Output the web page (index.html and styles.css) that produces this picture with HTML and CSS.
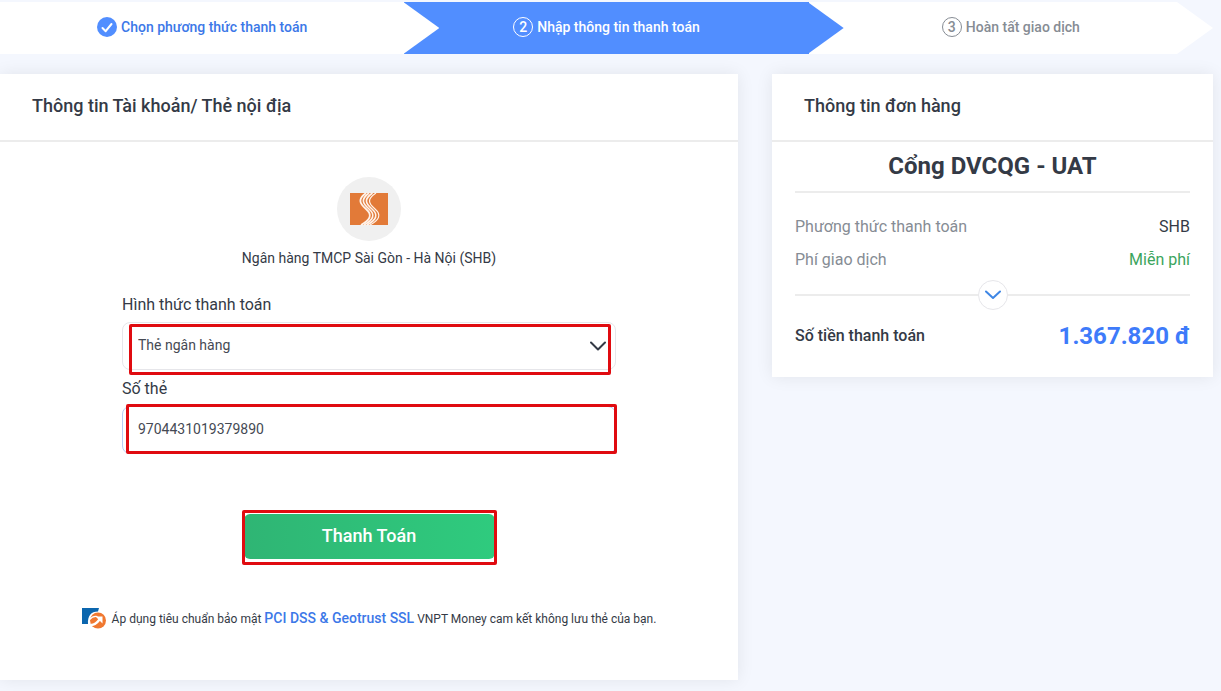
FILE: index.html
```html
<!DOCTYPE html>
<html lang="vi">
<head>
  <meta charset="UTF-8" />
  <meta name="viewport" content="width=device-width, initial-scale=1.0" />
  <title>Nhập thông tin thanh toán</title>
  <link rel="stylesheet" href="styles.css">
</head>
<body>
  <div class="page">
    <!-- Steps -->
    <ol class="steps">
      <li class="step step-done">
        <svg class="step-check" viewBox="0 0 20 20" aria-hidden="true">
          <circle cx="10" cy="10" r="10" fill="#518eff" />
          <path d="M5.5 11l3.2 3.2L14.5 7" fill="none" stroke="#fff" stroke-width="2" stroke-linecap="round" stroke-linejoin="round" />
        </svg>
        <span>Chọn phương thức thanh toán</span>
      </li>
      <li class="step step-active">
        <span class="step-number">2</span>
        <span>Nhập thông tin thanh toán</span>
      </li>
      <li class="step step-last">
        <span class="step-number">3</span>
        <span>Hoàn tất giao dịch</span>
      </li>
    </ol>

    <main class="content">
      <!-- Payment form -->
      <section class="card">
        <h2 class="card-title">Thông tin Tài khoản/ Thẻ nội địa</h2>
        <form class="pay-form">
          <div class="bank">
            <div class="bank-logo">
              <svg viewBox="0 0 40 34" aria-hidden="true">
                <rect x="1" y="1" width="38" height="32" fill="#e27a38" />
                <g fill="none" stroke="#fff3ea">
                  <path d="M17 1C9 7 10 11 17 17C24 23 21 28 12 33" stroke-width="1.8" />
                  <path d="M20 1C12 7 13 11 20 17C27 23 24 28 15 33" stroke-width="1.6" />
                  <path d="M23.500 1C15 7 16 11 23 17C30 23 27 28 18 33" stroke-width="1.6" />
                  <path d="M27 1C18 7 19 11 26 17C33 23 30 28 21 33" stroke-width="1.2" />
                </g>
              </svg>
            </div>
            <p class="bank-name">Ngân hàng TMCP Sài Gòn - Hà Nội (SHB)</p>
          </div>

          <label for="method">Hình thức thanh toán</label>
          <div class="field field-select">
            <select id="method" name="method">
              <option>Thẻ ngân hàng</option>
            </select>
            <svg class="select-arrow" viewBox="0 0 16 10" aria-hidden="true">
              <path d="M1 1.5l7 7 7-7" fill="none" stroke="#343a46" stroke-width="2" stroke-linecap="round" stroke-linejoin="round" />
            </svg>
          </div>

          <label for="card-number">Số thẻ</label>
          <div class="field field-input">
            <input type="text" id="card-number" name="card-number" value="9704431019379890" inputmode="numeric" />
          </div>

          <div class="submit">
            <button type="submit">Thanh Toán</button>
          </div>
        </form>

        <p class="security">
          <svg class="security-logo" viewBox="0 0 24 21" aria-hidden="true">
            <path d="M0 0H17L16 3.500C9 3.500 5.500 8 6 16H0z" fill="#0b66ae" />
            <circle cx="16" cy="12.500" r="8" fill="#f07830" />
            <path d="M7.500 11.500Q11 7.500 15.500 8.500" fill="none" stroke="#fff" stroke-width="1.200" />
            <path d="M8.500 17Q13 17.500 18 11" fill="none" stroke="#fff" stroke-width="2.400" />
            <path d="M13.500 8.500H20.500V15.500z" fill="#fff" />
          </svg>
          <span>Áp dụng tiêu chuẩn bảo mật <a href="#">PCI DSS &amp; Geotrust SSL</a> VNPT Money cam kết không lưu thẻ của bạn.</span>
        </p>
      </section>

      <!-- Order info -->
      <aside class="card">
        <h2 class="card-title">Thông tin đơn hàng</h2>
        <div class="order">
          <h3 class="merchant">Cổng DVCQG - UAT</h3>
          <dl class="order-rows">
            <div class="order-row">
              <dt>Phương thức thanh toán</dt>
              <dd>SHB</dd>
            </div>
            <div class="order-row">
              <dt>Phí giao dịch</dt>
              <dd class="free">Miễn phí</dd>
            </div>
          </dl>
          <div class="divider">
            <button type="button" class="toggle" aria-label="Xem chi tiết">
              <svg viewBox="0 0 16 10" aria-hidden="true">
                <path d="M1 1.500l7 6.500 7-6.500" fill="none" stroke="#3f87e5" stroke-width="2" stroke-linecap="round" stroke-linejoin="round" />
              </svg>
            </button>
          </div>
          <div class="total">
            <span>Số tiền thanh toán</span>
            <strong>1.367.820 đ</strong>
          </div>
        </div>
      </aside>
    </main>
  </div>
</body>
</html>
```

FILE: styles.css
```css
:root {
  --blue: #518eff;
  --blue-text: #3c78e8;
  --bg: #f4f7fe;
  --text: #343a46;
  --muted: #868c94;
  --line: #ececec;
  --mark: #e00b10;
}

* {
  box-sizing: border-box;
}

body {
  margin: 0;
  background: var(--bg);
  color: var(--text);
  font-family: Roboto, "Liberation Sans", sans-serif;
  font-size: 16px;
  line-height: 24px;
}

h2, h3, p, dl, dd {
  margin: 0;
}

.page {
  padding: 2px 8px 11px 0;
}

/* Steps */
.steps {
  display: grid;
  grid-template-columns: repeat(3, 1fr);
  margin: 0 0 20px;
  padding: 0;
  list-style: none;
}

.step {
  position: relative;
  display: flex;
  align-items: center;
  justify-content: center;
  gap: 4px;
  height: 52px;
  padding-bottom: 2px;
  background: #fff;
  font-size: 14px;
  font-weight: 500;
}

.step::after {
  content: "";
  position: absolute;
  top: 0;
  left: calc(100% - 1px);
  z-index: 1;
  width: 36px;
  height: 100%;
  background: #fff;
  clip-path: polygon(0 0, 100% 50%, 0 100%);
}

.step-done {
  color: var(--blue-text);
}

.step-active,
.step-active::after {
  background: var(--blue);
  color: #fff;
}

.step-active::after {
  z-index: 2;
}

.step-last {
  z-index: 0;
  color: var(--muted);
  clip-path: polygon(0 0, calc(100% - 36px) 0, 100% 50%, calc(100% - 36px) 100%, 0 100%);
}

.step-last::after {
  display: none;
}

.step-check {
  width: 20px;
  height: 20px;
}

.step-number {
  width: 20px;
  height: 20px;
  border: 1px solid currentColor;
  border-radius: 50%;
  line-height: 18px;
  text-align: center;
}

/* Cards */
.content {
  display: grid;
  grid-template-columns: minmax(0, 82fr) minmax(0, 49fr);
  gap: 34px;
  align-items: start;
}

.card {
  background: #fff;
  box-shadow: 0 0 16px rgba(0, 0, 0, 0.08);
}

.card-title {
  padding: 20px 32px 22px;
  border-bottom: 2px solid var(--line);
  font-size: 18px;
  font-weight: 500;
}

/* Payment form */
.pay-form {
  max-width: 494px;
  margin: 0 auto;
  padding-top: 35px;
}

.bank {
  margin-bottom: 23px;
  text-align: center;
}

.bank-logo {
  display: flex;
  align-items: center;
  justify-content: center;
  width: 64px;
  height: 64px;
  margin: 0 auto 5px;
  border-radius: 50%;
  background: #f0f0f0;
}

.bank-logo svg {
  width: 40px;
  height: 34px;
}

.bank-name {
  font-size: 14px;
}

.pay-form label {
  display: block;
  margin-bottom: 5px;
}

.field {
  position: relative;
  margin-bottom: 7px;
}

.field select,
.field input {
  display: block;
  width: 100%;
  height: 48px;
  padding: 0 15px 2px;
  border: 1px solid #e6e6ea;
  border-radius: 8px;
  background: #fff;
  color: #454a54;
  font: inherit;
  font-size: 14px;
  appearance: none;
}

.field input {
  border-color: #b9cdf5;
}

.select-arrow {
  position: absolute;
  top: 19px;
  right: 10px;
  width: 16px;
  height: 10px;
  pointer-events: none;
}

/* Highlight frames */
.field::after,
.submit::after {
  content: "";
  position: absolute;
  border: 3px solid var(--mark);
  border-radius: 2px;
  pointer-events: none;
}

.field-select::after {
  inset: 2px 5px -5px 7px;
}

.field-input::after {
  inset: -2px -1px 0 4px;
}

.submit::after {
  inset: -4px -2px -6px;
}

.submit {
  position: relative;
  width: 251px;
  margin: 60px auto 47px;
}

.submit button {
  display: block;
  width: 100%;
  height: 45px;
  padding: 0 0 2px;
  border: none;
  border-radius: 6px;
  background: linear-gradient(to right, #2fb574, #2fcb7e);
  color: #fff;
  font: inherit;
  font-size: 18px;
  font-weight: 500;
  cursor: pointer;
}

.security {
  display: flex;
  align-items: center;
  justify-content: center;
  gap: 6px;
  padding-bottom: 49px;
  font-size: 12px;
}

.security-logo {
  flex: none;
  width: 24px;
  height: 21px;
}

.security a {
  color: var(--blue-text);
  font-size: 14px;
  font-weight: 500;
  text-decoration: none;
}

/* Order info */
.order {
  padding: 0 23px 25px;
}

.merchant {
  padding: 8px 0 9px;
  border-bottom: 2px solid var(--line);
  font-size: 24px;
  font-weight: 700;
  line-height: 32px;
  text-align: center;
}

.order-rows {
  display: grid;
  gap: 9px;
  padding: 22px 0 8px;
}

.order-row,
.total {
  display: flex;
  align-items: center;
  justify-content: space-between;
}

.order-row dt {
  color: var(--muted);
}

.order-row .free {
  color: #3ba55d;
}

.divider {
  display: flex;
  align-items: center;
}

.divider::before,
.divider::after {
  content: "";
  flex: 1;
  height: 2px;
  background: var(--line);
}

.toggle {
  display: flex;
  align-items: center;
  justify-content: center;
  width: 30px;
  height: 30px;
  padding: 0;
  border: 1px solid #e6e6ea;
  border-radius: 50%;
  background: #fff;
  cursor: pointer;
}

.toggle svg {
  width: 16px;
  height: 10px;
}

.total {
  padding-top: 10px;
  font-weight: 500;
  line-height: 32px;
}

.total strong {
  color: #3e7bfa;
  font-size: 24px;
  font-weight: 700;
}
```
